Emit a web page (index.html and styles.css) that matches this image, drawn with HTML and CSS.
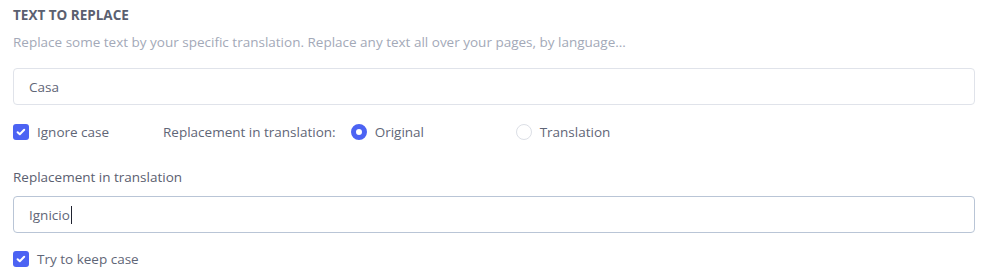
FILE: index.html
```html
<!DOCTYPE html>
<html lang="en">
<head>
  <meta charset="UTF-8">
  <title>Text to replace</title>
  <link rel="stylesheet" href="styles.css">
</head>
<body>
  <!-- Text replacement settings -->
  <section class="replace">
    <h2 class="title">TEXT TO REPLACE</h2>
    <p class="desc">Replace some text by your specific translation. Replace any text all over your pages, by language...</p>

    <div class="field">Casa</div>

    <div class="options">
      <label class="check">
        <span class="box"><svg viewBox="0 0 16 16" width="16" height="16"><path d="M4.6 8.2l2.2 2.1 4.4-4.5" fill="none" stroke="#fff" stroke-width="2" stroke-linecap="round" stroke-linejoin="round"/></svg></span>
        Ignore case
      </label>
      <span class="opt-label">Replacement in translation:</span>
      <label class="radio">
        <span class="dot on"></span>
        Original
      </label>
      <label class="radio">
        <span class="dot"></span>
        Translation
      </label>
    </div>

    <div class="label">Replacement in translation</div>
    <div class="field focus">Ignicio<span class="caret"></span></div>

    <div class="options last">
      <label class="check">
        <span class="box"><svg viewBox="0 0 16 16" width="16" height="16"><path d="M4.6 8.2l2.2 2.1 4.4-4.5" fill="none" stroke="#fff" stroke-width="2" stroke-linecap="round" stroke-linejoin="round"/></svg></span>
        Try to keep case
      </label>
    </div>
  </section>
</body>
</html>
```

FILE: styles.css
```css
* {
  margin: 0;
  padding: 0;
  box-sizing: border-box;
}
body {
  font-family: 'Open Sans', Lato, sans-serif;
  font-size: 13.5px;
  line-height: 18px;
  background: #fff;
  color: #5f6677;
}
.replace {
  padding: 6px 15px 0 13px;
}
.title {
  font-size: 13.5px;
  font-weight: 700;
  line-height: 18px;
  color: #5b6070;
}
.desc {
  margin-top: 9px;
  color: #a3a9b8;
}
/* Text fields */
.field {
  margin-top: 17px;
  height: 37px;
  border: 1px solid #e0e3ea;
  border-radius: 4px;
  padding: 0 15px;
  display: flex;
  align-items: center;
  color: #5f6677;
}
.field.focus {
  margin-top: 10px;
  border-color: #b9c5d6;
}
.caret {
  display: inline-block;
  width: 1px;
  height: 18px;
  margin-left: 1px;
  background: #1f2330;
}
/* Checkbox / radio row */
.options {
  margin-top: 17px;
  height: 20px;
  display: flex;
  align-items: center;
}
.options.last {
  margin-top: 16px;
}
.check, .radio {
  display: flex;
  align-items: center;
  gap: 8px;
}
.check {
  width: 150px;
}
.box {
  width: 16px;
  height: 16px;
  border-radius: 3px;
  background: #4c63f3;
  display: flex;
}
.opt-label {
  margin-right: 15px;
}
.radio {
  width: 165px;
}
.dot {
  width: 16px;
  height: 16px;
  border-radius: 50%;
  border: 1px solid #dcdfe6;
}
.dot.on {
  border: 5px solid #4c63f3;
}
.label {
  margin-top: 26px;
  color: #5b6070;
}
```
